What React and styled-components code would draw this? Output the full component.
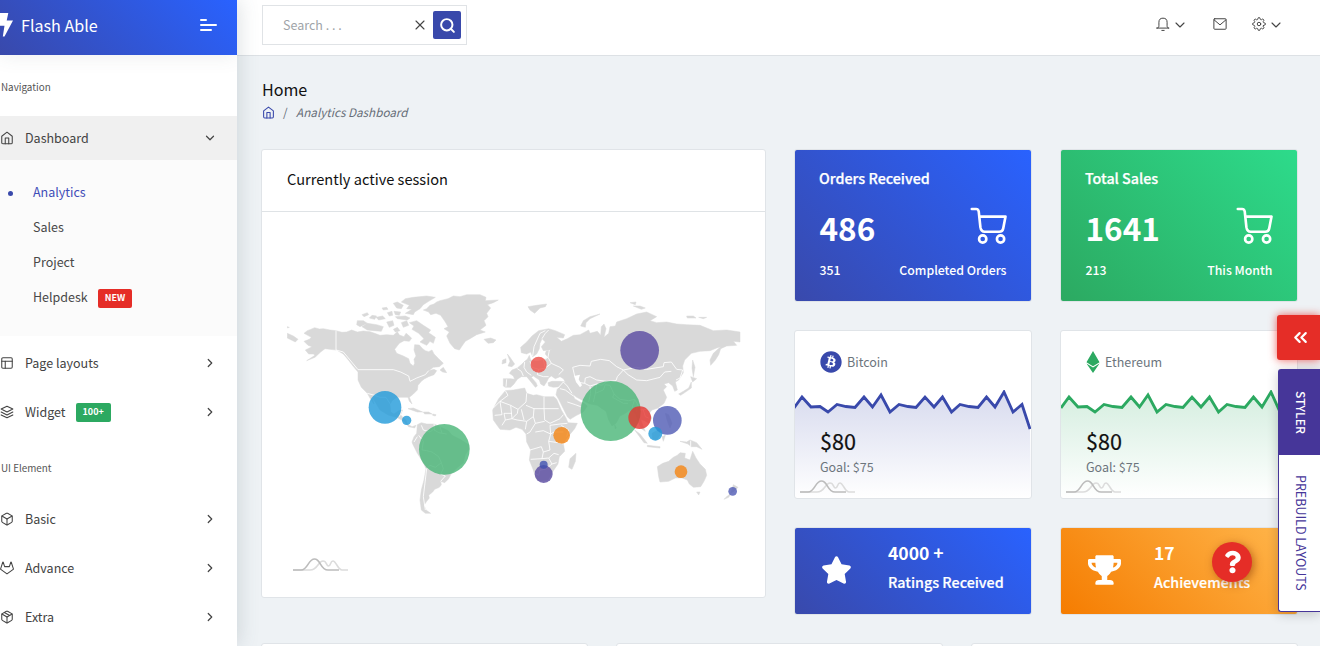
import React from "react";
import styled, { createGlobalStyle, css } from "styled-components";
import {
  FiHome, FiLayout, FiLayers, FiBox, FiGitlab, FiPackage, FiChevronRight,
  FiChevronDown, FiX, FiSearch, FiChevronsLeft, FiSettings,
} from "react-icons/fi";
import { FaStar, FaTrophy, FaQuestion, FaBitcoin, FaEthereum } from "react-icons/fa";

const Global = createGlobalStyle`
  * { box-sizing: border-box; }
  html, body { margin: 0; height: 100%; overflow: hidden; }
  body {
    background: #eef2f5;
    color: #111;
    font-family: "Noto Sans CJK SC", "Open Sans", sans-serif;
    font-size: 12.5px;
    line-height: 1.5;
  }
`;

const gradients = {
  blue: "linear-gradient(45deg, #3949ab, #2962ff)",
  green: "linear-gradient(45deg, #2ca961, #2ddb8b)",
  orange: "linear-gradient(45deg, #f57c00, #ffb74d)",
};

const Page = styled.div`
  display: flex;
  height: 646px;
  width: 1320px;
  overflow: hidden;
`;

/* sidebar */
const Sidebar = styled.aside`
  flex: 0 0 237px;
  position: relative;
  z-index: 2;
  background: #fff;
  box-shadow: 1px 0 20px rgba(69, 90, 100, 0.2);
  overflow: hidden;
  clip-path: inset(0 -30px 0 0);
`;
const Brand = styled.div`
  display: flex;
  align-items: center;
  height: 55px;
  background: ${gradients.blue};
  color: #fff;
  font-size: 16.1px;
  padding: 0 20px 5px 0;
  box-shadow: 0 1px 20px rgba(69, 90, 100, 0.1);
`;
const BrandMark = styled.svg`
  width: 13px;
  height: 24px;
  margin-right: 8px;
`;
const BrandName = styled.span`
  flex: 1;
`;
const Burger = styled.span`
  display: flex;
  flex-direction: column;
  gap: 3px;
  width: 17px;
`;
const BurgerLine = styled.i`
  height: 2px;
  border-radius: 1px;
  background: #fff;
  width: ${(p) => p.$w}px;
`;
const Caption = styled.div`
  height: ${(p) => p.$h}px;
  padding: ${(p) => p.$top}px 0 0 1px;
  font-size: 9.85px;
  line-height: 16px;
  color: #555;
`;
const NavItem = styled.div`
  display: flex;
  align-items: center;
  height: 44px;
  margin-bottom: ${(p) => (p.$active ? 0 : 5)}px;
  padding-right: 20px;
  color: #434343;
  background: ${(p) => (p.$active ? "#f0f0f0" : "transparent")};
  > svg { width: 14px; height: 14px; stroke-width: 1.8; flex: none; }
  > svg:last-child { width: 14px; height: 14px; margin-left: auto; stroke-width: 2.1; }
`;
const NavLabel = styled.span`
  margin-left: 11px;
`;
const Badge = styled.span`
  margin: 1px 0 0 10px;
  padding: 0 7px;
  height: 19px;
  line-height: 18px;
  border-radius: 2px;
  color: #fff;
  font-size: 9px;
  font-weight: 700;
  background: ${(p) => p.$bg};
`;
const SubMenu = styled.div`
  background: #fbfbfb;
  height: 176px;
  padding-top: 15px;
  margin-bottom: 5px;
`;
const SubItem = styled.div`
  display: flex;
  align-items: center;
  height: 35px;
  padding-left: ${(p) => (p.$active ? 8 : 33)}px;
  color: ${(p) => (p.$active ? "#3f4db8" : "#484848")};
`;
const Dot = styled.i`
  width: 5px;
  height: 5px;
  border-radius: 50%;
  background: #3949ab;
  margin: 2px 20px 0 0;
`;

/* top bar */
const Main = styled.main`
  flex: 1;
  min-width: 0;
`;
const TopBar = styled.header`
  display: flex;
  justify-content: space-between;
  height: 56px;
  background: #fff;
  border-bottom: 1px solid #dde1e5;
  padding: 5px 36px 0 25px;
`;
const Search = styled.div`
  display: flex;
  align-items: center;
  width: 205px;
  height: 40px;
  border: 1px solid #e0e3e6;
  padding: 0 5px 0 20px;
  color: #a0a4a8;
  > svg { width: 16px; height: 16px; color: #444; margin-right: 5px; stroke-width: 1.7; }
`;
const SearchText = styled.span`
  flex: 1;
`;
const SearchButton = styled.span`
  display: grid;
  place-items: center;
  width: 28px;
  height: 28px;
  border-radius: 2px;
  background: #3949ab;
  color: #fff;
  svg { width: 17px; height: 17px; stroke-width: 2.8; }
`;
const Actions = styled.div`
  display: flex;
  align-items: center;
  height: 38px;
  gap: 25px;
  color: #444;
`;
const Action = styled.span`
  display: flex;
  align-items: center;
  gap: 2px;
  svg { width: 14px; height: 14px; stroke-width: 1.7; }
  svg + svg { width: 16px; height: 16px; stroke-width: 1.7; margin-top: 2px; }
`;

/* page content */
const Content = styled.div`
  padding: 21px 22px 0 24px;
`;
const PageTitle = styled.h1`
  margin: 0 0 0 1px;
  font-size: 16.1px;
  font-weight: 400;
  line-height: 24px;
`;
const Crumbs = styled.div`
  display: flex;
  align-items: center;
  height: 22px;
  margin: 0 0 26px 1px;
  color: #666e78;
  font-size: 11.7px;
  svg { color: #3949ab; width: 13px; height: 13px; margin-right: 8px; }
`;
const Crumb = styled.em`
  margin-left: 8.500px;
`;
const Row = styled.div`
  display: grid;
  grid-template-columns: 505px 238px 238px;
  gap: 28px;
`;
const Column = styled.div`
  display: flex;
  flex-direction: column;
  gap: 28px;
`;
const Card = styled.section`
  background: #fff;
  border: 1px solid #e0e4e8;
  border-radius: 3px;
  overflow: hidden;
`;
const MapCard = styled(Card)`
  height: 449px;
`;
const CardTitle = styled.h2`
  margin: 0;
  height: 62px;
  padding: 0 25px;
  line-height: 58px;
  font-size: 14.6px;
  font-weight: 400;
  border-bottom: 1px solid #dfe3e6;
`;
const MapBody = styled.div`
  padding: 76px 25px 0;
  > svg { display: block; }
`;
const WaveMark = styled.svg`
  display: block;
  width: 55px;
  height: 15px;
  fill: none;
  stroke-width: 1.6;
`;
const MapFooter = styled.div`
  padding: 39px 0 0 6px;
`;
const StatCard = styled(Card)`
  height: 153px;
  padding: 16px 24px 0 24px;
  color: #fff;
  background: ${(p) => gradients[p.$tone]} border-box;
`;
const StatTitle = styled.div`
  font-size: 14.3px;
  font-weight: 500;
  -webkit-text-stroke: 0.25px #fff;
  line-height: 24px;
`;
const StatRow = styled.div`
  display: flex;
  justify-content: space-between;
  align-items: center;
  padding: 0 0.5px;
  ${(p) =>
    p.$big
      ? css`
          height: 56px;
          margin-top: 10px;
          font-size: 31.5px;
          font-weight: 700;
        `
      : css`
          height: 26px;
          margin-top: 1px;
          font-size: 12.3px;
          font-weight: 500;
        `}
`;
const CartIcon = styled.svg`
  width: 38px;
  height: 39px;
  margin-top: -5px;
  overflow: visible;
  fill: none;
  stroke: currentColor;
  stroke-width: 8;
  stroke-linecap: round;
  stroke-linejoin: round;
`;
const CoinCard = styled(Card)`
  height: 169px;
  display: flex;
  flex-direction: column;
`;
const CoinHead = styled.div`
  display: flex;
  align-items: center;
  gap: 5px;
  height: 59px;
  padding: 3px 24px 0 25px;
  flex: none;
  color: #6c757d;
  svg { height: 22px; width: ${(p) => p.$iw}px; color: ${(p) => p.$c}; }
`;
const ChartArea = styled.div`
  display: grid;
  flex: 1;
  > * { grid-area: 1 / 1; }
`;
const CoinText = styled.div`
  padding: 36px 25px 0;
`;
const Price = styled.div`
  font-size: 21.6px;
  line-height: 30px;
  margin-bottom: 1px;
  -webkit-text-stroke: 0.2px #111;
`;
const Goal = styled.div`
  color: #6c757d;
  line-height: 20px;
  margin-bottom: 2px;
`;
const CoinMark = styled.div`
  margin-left: -20px;
`;
const BadgeCard = styled(Card)`
  height: 88px;
  display: flex;
  align-items: center;
  padding: 0 0 8px ${(p) => p.$left}px;
  color: #fff;
  font-weight: 500;
  background: ${(p) => gradients[p.$tone]} border-box;
  > svg { width: ${(p) => p.$iw}px; height: 30px; margin-top: 6px; flex: none; }
`;
const BadgeText = styled.div`
  margin-left: ${(p) => p.$gap}px;
  font-size: 14.3px;
  line-height: 28px;
  white-space: nowrap;
  -webkit-text-stroke: 0.2px #fff;
`;
const BadgeNumber = styled.div`
  font-size: 17.5px;
  font-weight: 700;
  line-height: 30px;
  -webkit-text-stroke: 0;
`;
const NextRow = styled.div`
  display: grid;
  grid-template-columns: repeat(3, 1fr);
  gap: 28px;
  margin-top: 28px;
`;
const NextCard = styled(Card)`
  height: 80px;
`;

/* floating controls over the page */
const Dock = styled.div`
  position: absolute;
  z-index: 3;
  right: 0;
  top: 315px;
  width: 43px;
  display: flex;
  flex-direction: column;
  align-items: flex-end;
`;
const DockToggle = styled.div`
  width: 43px;
  height: 45px;
  margin-bottom: 9px;
  display: grid;
  place-items: center;
  border-radius: 3px 0 0 3px;
  background: #e52d27;
  color: #fff;
  box-shadow: 0 0 9px rgba(229, 45, 39, 0.75);
  svg { width: 21px; height: 21px; margin-left: 4px; stroke-width: 2.5; }
`;
const DockTabs = styled.div`
  width: 42px;
  border-radius: 3px 0 0 3px;
  box-shadow: 0 2px 12px rgba(0, 0, 0, 0.2);
`;
const DockTab = styled.div`
  display: grid;
  place-items: center;
  width: 42px;
  padding-left: 3px;
  ${(p) =>
    p.$solid
      ? css`height: 86px; background: #463699; color: #fff; font-weight: 500; border-radius: 3px 0 0 0;`
      : css`height: 157px; background: #fff; color: #463699; border: solid #463699; border-width: 0 0 1px 1px; border-radius: 0 0 0 3px;`}
`;
const DockLabel = styled.span`
  writing-mode: vertical-rl;
  white-space: nowrap;
  font-size: ${(p) => p.$size}px;
`;
const Help = styled.div`
  position: absolute;
  z-index: 3;
  left: 1212px;
  top: 542px;
  width: 40px;
  height: 40px;
  border-radius: 50%;
  display: grid;
  place-items: center;
  background: #e52d27;
  color: #fff;
  box-shadow: 2px 2px 9px rgba(120, 40, 0, 0.5);
  svg { width: 17px; height: 24px; }
`;
const LineIcon = styled.svg`
  fill: none;
  stroke: currentColor;
  stroke-linecap: round;
  stroke-linejoin: round;
`;

const land = [
  "M72 160L82 152L90 149L104 143L118 147L130 146L150 150L168 152L186 157L200 156L215 150L232 156L250 153L270 155L284 160L300 166L320 164L340 166L352 155L358 165L372 170L378 160L385 165L395 175L388 184L372 182L358 190L344 208L350 220L370 228L386 236L390 250L400 258L404 250L402 238L408 228L402 210L404 194L418 195L428 206L436 212L446 215L456 210L462 222L476 236L490 250L478 260L460 262L446 272L462 268L470 272L462 284L446 290L434 296L424 304L414 316L412 330L400 342L388 352L396 372L388 364L384 352L366 352L350 352L336 362L330 374L332 396L342 402L356 392L368 390L362 404L368 412L378 420L382 432L396 440L408 436L404 444L386 440L372 424L350 412L326 406L300 390L288 370L276 350L282 372L272 358L262 340L244 322L234 300L234 276L222 262L205 240L190 222L170 210L150 208L135 206L122 216L105 232L80 242L105 226L100 222L86 222L76 210L84 206L96 200L84 196L72 184L88 178L94 172Z",
  "M412 434L424 428L440 432L462 432L480 440L505 452L516 466L540 478L566 494L568 506L556 524L550 548L528 566L512 584L506 596L494 608L482 604L484 614L478 622L464 628L458 636L446 646L448 654L440 664L432 676L438 690L452 700L436 700L424 690L420 660L424 630L432 600L438 566L430 548L412 520L398 492L396 486L402 470L410 460Z",
  "M430 90L440 86L450 76L462 72L470 66L480 62L504 56L520 48L540 50L560 44L600 44L618 52L616 62L655 60L640 68L622 74L632 84L620 100L624 110L612 122L618 136L600 150L616 156L590 164L570 176L556 184L546 198L538 210L524 206L510 190L500 168L508 156L492 146L504 140L496 126L482 106L468 100L452 104L446 96Z",
  "M364 66L376 56L400 52L440 48L466 52L446 64L430 74L420 86L404 96L400 104L376 100L396 88L380 86L388 76Z",
  "M340 70L352 66L370 76L364 86L350 84Z",
  "M232 122L250 122L262 130L240 140L230 134Z",
  "M246 140L262 130L290 134L310 140L304 154L282 152L262 150Z",
  "M246 104L262 98L266 104L252 110ZM268 114L276 106L290 108L284 118ZM288 112L308 108L316 116L296 120ZM306 84L320 82L324 88L310 90ZM322 98L336 94L338 106L328 108ZM342 94L362 96L358 106L346 104ZM346 110L376 108L390 114L382 120L352 116ZM320 126L338 122L342 136L328 142ZM340 148L352 142L360 152L346 156ZM364 128L380 122L386 136L370 142Z",
  "M388 128L410 122L430 136L452 150L446 158L466 172L460 190L450 184L440 196L420 186L432 176L416 160L396 148L402 138Z",
  "M480 270L490 262L500 278L488 276Z",
  "M384 386L400 384L428 396L412 396ZM430 396L446 396L456 402L434 402ZM458 402L468 404L466 408L458 406Z",
  "M612 178L632 174L648 180L640 188L624 190Z",
  "M682 222L690 232L704 252L696 260L684 258L690 244ZM668 240L678 236L678 248L666 252Z",
  "M22 160L40 168L54 178L46 186L22 174ZM22 140L28 142L22 144Z",
];
const landEast = [
  "M70 296L92 296L104 298L100 288L88 280L96 270L112 264L126 252L134 244L142 238L148 226L152 240L170 244L190 240L204 232L196 222L198 214L220 208L208 210L190 212L184 200L196 186L186 176L180 190L178 206L170 222L158 230L152 216L140 222L124 218L122 202L140 186L156 168L176 152L206 146L226 152L254 164L250 174L230 172L244 184L262 176L280 166L300 164L326 150L330 160L352 154L362 166L364 140L372 132L378 146L372 172L386 160L390 140L406 138L410 126L440 116L470 102L500 96L530 110L510 122L530 128L560 126L590 132L620 134L660 136L700 152L740 150L780 156L780 186L760 184L770 196L740 198L722 206L716 224L706 240L692 256L690 240L700 220L722 200L710 204L690 212L660 214L634 220L614 240L608 258L610 278L596 300L586 306L592 330L584 334L578 318L566 308L552 312L560 320L550 330L560 352L552 370L534 384L516 390L508 400L516 414L506 430L494 422L482 418L490 440L496 454L484 446L474 424L466 400L450 390L436 400L420 408L408 430L396 438L386 420L378 394L366 386L352 376L330 372L310 362L290 352L278 342L284 356L300 366L312 370L322 378L310 396L290 406L270 418L262 410L250 386L236 358L228 344L232 326L240 320L220 322L206 318L204 308L216 304L240 304L256 306L250 296L240 290L226 296L214 288L206 294L200 306L192 318L182 312L178 300L160 288L154 292L168 308L172 318L166 322L150 302L140 290L124 290L112 298L102 312L92 322L76 322L70 318Z",
  "M76 332L100 330L134 324L140 340L160 346L170 344L192 350L222 350L230 358L244 390L258 414L264 428L292 430L284 446L264 470L250 490L254 514L238 530L234 552L220 572L204 600L178 602L168 596L160 570L148 540L152 510L140 486L138 462L126 448L108 442L90 450L60 448L40 420L38 390L56 356Z",
  "M288 520L286 544L276 568L266 562L270 536Z",
  "M532 560L548 550L566 544L580 532L592 526L600 518L616 520L614 534L630 540L638 514L648 534L660 552L676 568L680 586L672 604L662 620L640 622L628 612L622 600L606 594L586 594L566 604L540 606L536 590Z",
  "M650 636L660 636L656 645ZM760 614L774 622L762 634L752 640ZM752 642L746 652L732 658L742 648Z",
  "M600 484L620 486L630 480L650 488L666 508L650 500L634 500L624 492Z",
  "M464 450L480 462L502 490L492 488ZM502 496L540 500L540 504L502 500ZM516 460L540 446L540 466L530 480L518 476ZM546 470L556 466L550 484ZM556 400L566 404L576 430L570 444L562 424Z",
  "M632 290L650 296L638 306ZM596 342L610 334L626 324L634 306L634 324L620 334L602 346ZM638 240L645 262L640 290L636 264Z",
  "M302 138L310 122L330 110L360 102L330 116L318 128L316 142ZM144 80L170 76L200 72L196 80L180 84L164 100L150 90ZM450 68L468 66L466 74ZM460 78L480 78L496 84L484 88ZM620 108L640 108L648 114L622 114ZM656 112L680 112L670 116Z",
  "M404 434L409 444L405 446Z",
];
const borders =
  "M168 152V210L190 216L210 240L234 269H340L362 276L386 288L390 304L410 294L436 284L446 272M262 340L284 346L300 352L318 352L332 374M366 392L358 410M412 470L402 486M424 436L430 450L450 456L460 448L476 458L500 462M416 466L430 484L426 510L440 512L456 516L476 530L484 548L466 562L450 556L440 566L436 600L430 650L436 690M484 548L490 566L482 582L496 588L482 604M480 440L486 460M462 432L464 452";
const bordersEast =
  "M208 210L204 232L214 250L240 262L250 270L236 284M186 176L196 160L206 150M158 228L162 200L180 160L196 152M134 246L132 262L140 276L154 286M150 244L156 262L176 268L196 264L214 250M112 266L124 274L130 288M176 268L172 284L190 290L206 290M204 232L190 240L196 264M80 298L78 320M284 288L278 262L300 256L330 258L334 244L362 238L388 242L410 260L430 270L470 262L500 268L550 260L552 248L574 246L590 268L608 270L600 294L588 300M430 270L444 284L470 300L500 302L540 292L554 276L574 274M430 270L412 290L408 302L380 304L350 300L330 290L316 294L314 310L290 306M232 326L250 306L262 318L276 340M240 326L256 330L280 348M262 366L286 374L302 380M314 310L330 318L350 312L366 316L380 304M330 320L332 340L326 366M350 312L346 340L340 366M346 340L370 330L376 314L390 316L402 342L420 358L446 362L464 358L472 372L480 390L500 388M402 342L398 352L430 370L444 370M464 358L456 384M472 372L470 396M490 390L496 410L506 414M76 332L84 346L60 364L40 384M60 364L92 376L114 388L138 366L140 340M60 364L66 404L44 406M92 376L96 416L76 420L66 436M114 388L112 400L96 416M138 376L162 386L192 386V350M162 386L160 410L140 424L112 420L96 416M192 386H236M192 386L194 420L210 430L240 416L250 404M160 410L166 430L194 424M140 424L136 448M166 430L150 456L140 462M166 456L190 452L212 462L210 436L240 432L262 430M212 462L206 484L210 510L190 516L184 500L150 510M212 462L222 456H250M206 484L236 488L250 492M190 516L186 536L152 538M186 536L206 534L222 520L236 524M206 534L216 552L196 568L180 570L176 586L164 580M216 552L230 548M124 388L132 420M76 420L72 400L96 400M244 436L266 450L260 470M632 482V500";

const bubbles = [
  [315, 382, 49, "#209ad9"], [380, 421, 14, "#209ad9"], [493, 508, 76, "#48b577"],
  [776, 254, 24, "#ee4d46"], [1079, 211, 58, "#5748a0"], [992, 393, 90, "#48b577"],
  [1079, 413, 34, "#e53530"], [1162, 421, 43, "#4f5ab4"], [1126, 461, 21, "#209ad9"],
  [845, 466, 25, "#f58412"], [791, 582, 27, "#5748a0"], [791, 554, 12, "#3f51b0"],
  [1203, 575, 19, "#f58412"], [1358, 634, 13, "#4f5ab4"],
];

function WorldMap() {
  return (
    <svg width="454" height="230" viewBox="21 24 1362 690">
      <g fill="#d9d9d9" stroke="#d9d9d9" strokeWidth="1.5" strokeLinejoin="round">
        {land.map((d) => <path key={d} d={d} />)}
        <g transform="translate(600 0)">
          {landEast.map((d) => <path key={d} d={d} />)}
        </g>
      </g>
      <path transform="translate(600 0)" fill="#fff" d="M282 288L300 284L296 298L306 316L300 322L288 306Z" />
      <g fill="none" stroke="#fff" strokeWidth="2.6" strokeLinejoin="round">
        <path d={borders} />
        <path transform="translate(600 0)" d={bordersEast} />
      </g>
      {bubbles.map(([x, y, r, c]) => (
        <circle key={`${x}-${y}`} cx={x} cy={y} r={r} fill={c} fillOpacity="0.8" />
      ))}
    </svg>
  );
}

function Wave() {
  return (
    <WaveMark viewBox="0 0 55 15">
      <path stroke="#dcdcdc" d="M0 13H17C25 13 25 4 30 4C34 4 33 9 35.500 9C38 9 37 4 40 4C43 4 45 13 49 13H55" />
      <path stroke="#bcbcbc" d="M0 13H8C15 13 15 2 21.500 2C28 2 27 13 35 13H46" />
    </WaveMark>
  );
}

function Cart() {
  return (
    <CartIcon viewBox="549 200 114 118">
      <path d="M557 209H570Q577 209 578 217L583 264Q585 278 596 278H640Q650 278 652 268L659 232H581" />
      <circle cx="590" cy="300" r="11" />
      <circle cx="644" cy="300" r="11" />
    </CartIcon>
  );
}

function Bell() {
  return (
    <LineIcon viewBox="0 0 24 24">
      <path d="M1.500 19H22.500C20 19 19 17.500 19 15V9A7 7 0 0 0 5 9V15C5 17.500 4 19 1.500 19M10 23H14" />
    </LineIcon>
  );
}

function Mail() {
  return (
    <LineIcon viewBox="0 0 24 24">
      <rect x="1.500" y="3" width="21" height="18" rx="1.500" />
      <path d="M2 5L12 13.500L22 5" />
    </LineIcon>
  );
}

const trend = [
  [0, 16], [8, 5], [17, 15], [26, 14.500], [34, 20], [43, 12.500], [52, 14.500], [61, 15.500],
  [70, 5], [78.500, 15], [87, 3], [96, 20], [105, 12.500], [114, 14.500], [122, 15.500], [131, 5],
  [140, 15], [148.500, 5], [157.500, 20], [166, 12.500], [175, 14.500], [184, 15.500], [192.500, 5],
  [201, 15], [210, 0], [219, 20], [228, 12.500], [236, 37],
];

function Trend({ color, id, shift }) {
  const line = trend.map(([x, y]) => `${x + shift},${y + 2}`).join(" ");
  return (
    <svg width="236" height="108" viewBox="0 0 236 108">
      <defs>
        <linearGradient id={id} x1="0" y1="0" x2="0" y2="1">
          <stop offset="0" stopColor={color} stopOpacity="0.2" />
          <stop offset="1" stopColor={color} stopOpacity="0" />
        </linearGradient>
      </defs>
      <polygon points={`0,108 ${line} 236,108`} fill={`url(#${id})`} />
      <polyline points={line} fill="none" stroke={color} strokeWidth="2.8" />
    </svg>
  );
}

function Stat({ tone, title, value, count, note }) {
  return (
    <StatCard $tone={tone}>
      <StatTitle>{title}</StatTitle>
      <StatRow $big><span>{value}</span><Cart /></StatRow>
      <StatRow><span>{count}</span><span>{note}</span></StatRow>
    </StatCard>
  );
}

function Coin({ icon, name, color, iw, shift }) {
  return (
    <CoinCard>
      <CoinHead $c={color} $iw={iw}>{icon}<span>{name}</span></CoinHead>
      <ChartArea>
        <Trend color={color} id={name} shift={shift} />
        <CoinText>
          <Price>$80</Price>
          <Goal>Goal: $75</Goal>
          <CoinMark><Wave /></CoinMark>
        </CoinText>
      </ChartArea>
    </CoinCard>
  );
}

function Nav({ icon: Icon, label, badge }) {
  return (
    <NavItem>
      <Icon /><NavLabel>{label}</NavLabel>
      {badge && <Badge $bg="#2ca961">{badge}</Badge>}
      <FiChevronRight />
    </NavItem>
  );
}

export default function App() {
  return (
    <Page>
      <Global />
      <Sidebar>
        <Brand>
          <BrandMark viewBox="0 0 13 24"><path fill="#fff" d="M0 0H8.300L6.700 7.600H13L4.500 23.400H2.800L4.500 12.700H0Z" /></BrandMark>
          <BrandName>Flash Able</BrandName>
          <Burger><BurgerLine $w={7} /><BurgerLine $w={17} /><BurgerLine $w={12} /></Burger>
        </Brand>
        <Caption $h={61} $top={24}>Navigation</Caption>
        <NavItem $active><FiHome /><NavLabel>Dashboard</NavLabel><FiChevronDown /></NavItem>
        <SubMenu>
          <SubItem $active><Dot />Analytics</SubItem>
          <SubItem>Sales</SubItem>
          <SubItem>Project</SubItem>
          <SubItem>Helpdesk<Badge $bg="#e52d27">NEW</Badge></SubItem>
        </SubMenu>
        <Nav icon={FiLayout} label="Page layouts" />
        <Nav icon={FiLayers} label="Widget" badge="100+" />
        <Caption $h={58} $top={21}>UI Element</Caption>
        <Nav icon={FiBox} label="Basic" />
        <Nav icon={FiGitlab} label="Advance" />
        <Nav icon={FiPackage} label="Extra" />
      </Sidebar>
      <Main>
        <TopBar>
          <Search>
            <SearchText>Search . . .</SearchText>
            <FiX />
            <SearchButton><FiSearch /></SearchButton>
          </Search>
          <Actions>
            <Action><Bell /><FiChevronDown /></Action>
            <Action><Mail /></Action>
            <Action><FiSettings /><FiChevronDown /></Action>
          </Actions>
        </TopBar>
        <Content>
          <PageTitle>Home</PageTitle>
          <Crumbs><FiHome />/<Crumb>Analytics Dashboard</Crumb></Crumbs>
          <Row>
            <MapCard>
              <CardTitle>Currently active session</CardTitle>
              <MapBody>
                <WorldMap />
                <MapFooter><Wave /></MapFooter>
              </MapBody>
            </MapCard>
            <Column>
              <Stat tone="blue" title="Orders Received" value="486" count="351" note="Completed Orders" />
              <Coin icon={<FaBitcoin />} name="Bitcoin" color="#3949ab" iw={22} shift={-1} />
              <BadgeCard $tone="blue" $left={26} $iw={31}>
                <FaStar />
                <BadgeText $gap={36}><BadgeNumber>4000 +</BadgeNumber>Ratings Received</BadgeText>
              </BadgeCard>
            </Column>
            <Column>
              <Stat tone="green" title="Total Sales" value="1641" count="213" note="This Month" />
              <Coin icon={<FaEthereum />} name="Ethereum" color="#2ca961" iw={14} shift={0} />
              <BadgeCard $tone="orange" $left={27} $iw={33}>
                <FaTrophy />
                <BadgeText $gap={33}><BadgeNumber>17</BadgeNumber>Achievements</BadgeText>
              </BadgeCard>
            </Column>
          </Row>
          <NextRow><NextCard /><NextCard /><NextCard /></NextRow>
        </Content>
      </Main>
      <Dock>
        <DockToggle><FiChevronsLeft /></DockToggle>
        <DockTabs>
          <DockTab $solid><DockLabel $size={12.1}>STYLER</DockLabel></DockTab>
          <DockTab><DockLabel $size={12.5}>PREBUILD LAYOUTS</DockLabel></DockTab>
        </DockTabs>
      </Dock>
      <Help><FaQuestion /></Help>
    </Page>
  );
}
